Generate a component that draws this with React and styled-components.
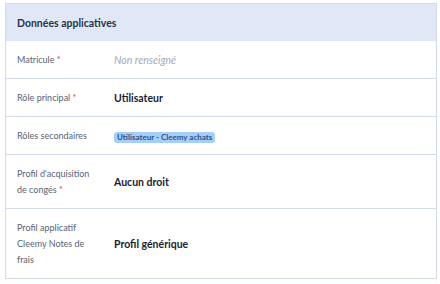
import React from 'react';
import styled, { createGlobalStyle } from 'styled-components';

const GlobalStyle = createGlobalStyle`
  body {
    margin: 0;
    background: #ffffff;
    font-family: Lato, "Open Sans", sans-serif;
  }
`;

const Page = styled.div`
  padding: 3px 3px 0 5px;
`;

const Card = styled.section`
  border: 1px solid #d3daea;
  border-bottom: none;
  background: #fff;
`;

const Header = styled.h2`
  margin: 0;
  height: 37px;
  display: flex;
  align-items: center;
  padding: 0 11px;
  background: #e0e7f7;
  font-size: 10.5px;
  font-weight: 700;
  color: #2c3345;
`;

const Row = styled.div`
  display: grid;
  grid-template-columns: 97px 1fr;
  align-items: center;
  padding: 11px 11px 10px;
  border-bottom: 1px solid #d3daea;
`;

const Label = styled.div`
  font-size: 9px;
  line-height: 16px;
  color: #5b6270;
  padding-right: 20px;
`;

const Required = styled.span`
  color: #d8414a;
`;

const Value = styled.div`
  font-size: 10.5px;
  line-height: 16px;
  font-weight: ${p => (p.$empty ? 400 : 700)};
  font-style: ${p => (p.$empty ? 'italic' : 'normal')};
  color: ${p => (p.$empty ? '#a4a9b6' : '#1c2130')};
`;

const Badge = styled.span`
  display: inline-block;
  vertical-align: middle;
  background: #a6cff7;
  color: #2f4f8f;
  font-size: 8px;
  font-weight: 700;
  line-height: 11px;
  padding: 0 3px;
  border-radius: 3px;
`;

const rows = [
  { label: 'Matricule', required: true, value: 'Non renseigné', empty: true },
  { label: 'Rôle principal', required: true, value: 'Utilisateur' },
  { label: 'Rôles secondaires', badges: ['Utilisateur - Cleemy achats'] },
  { label: "Profil d'acquisition de congés", required: true, value: 'Aucun droit' },
  { label: 'Profil applicatif Cleemy Notes de frais', value: 'Profil générique' },
];

export default function App() {
  return (
    <Page>
      <GlobalStyle />
      <Card>
        <Header>Données applicatives</Header>
        {rows.map(r => (
          <Row key={r.label}>
            <Label>
              {r.label}
              {r.required && <Required>{'\u00a0*'}</Required>}
            </Label>
            <Value $empty={r.empty}>
              {r.badges ? r.badges.map(b => <Badge key={b}>{b}</Badge>) : r.value}
            </Value>
          </Row>
        ))}
      </Card>
    </Page>
  );
}
